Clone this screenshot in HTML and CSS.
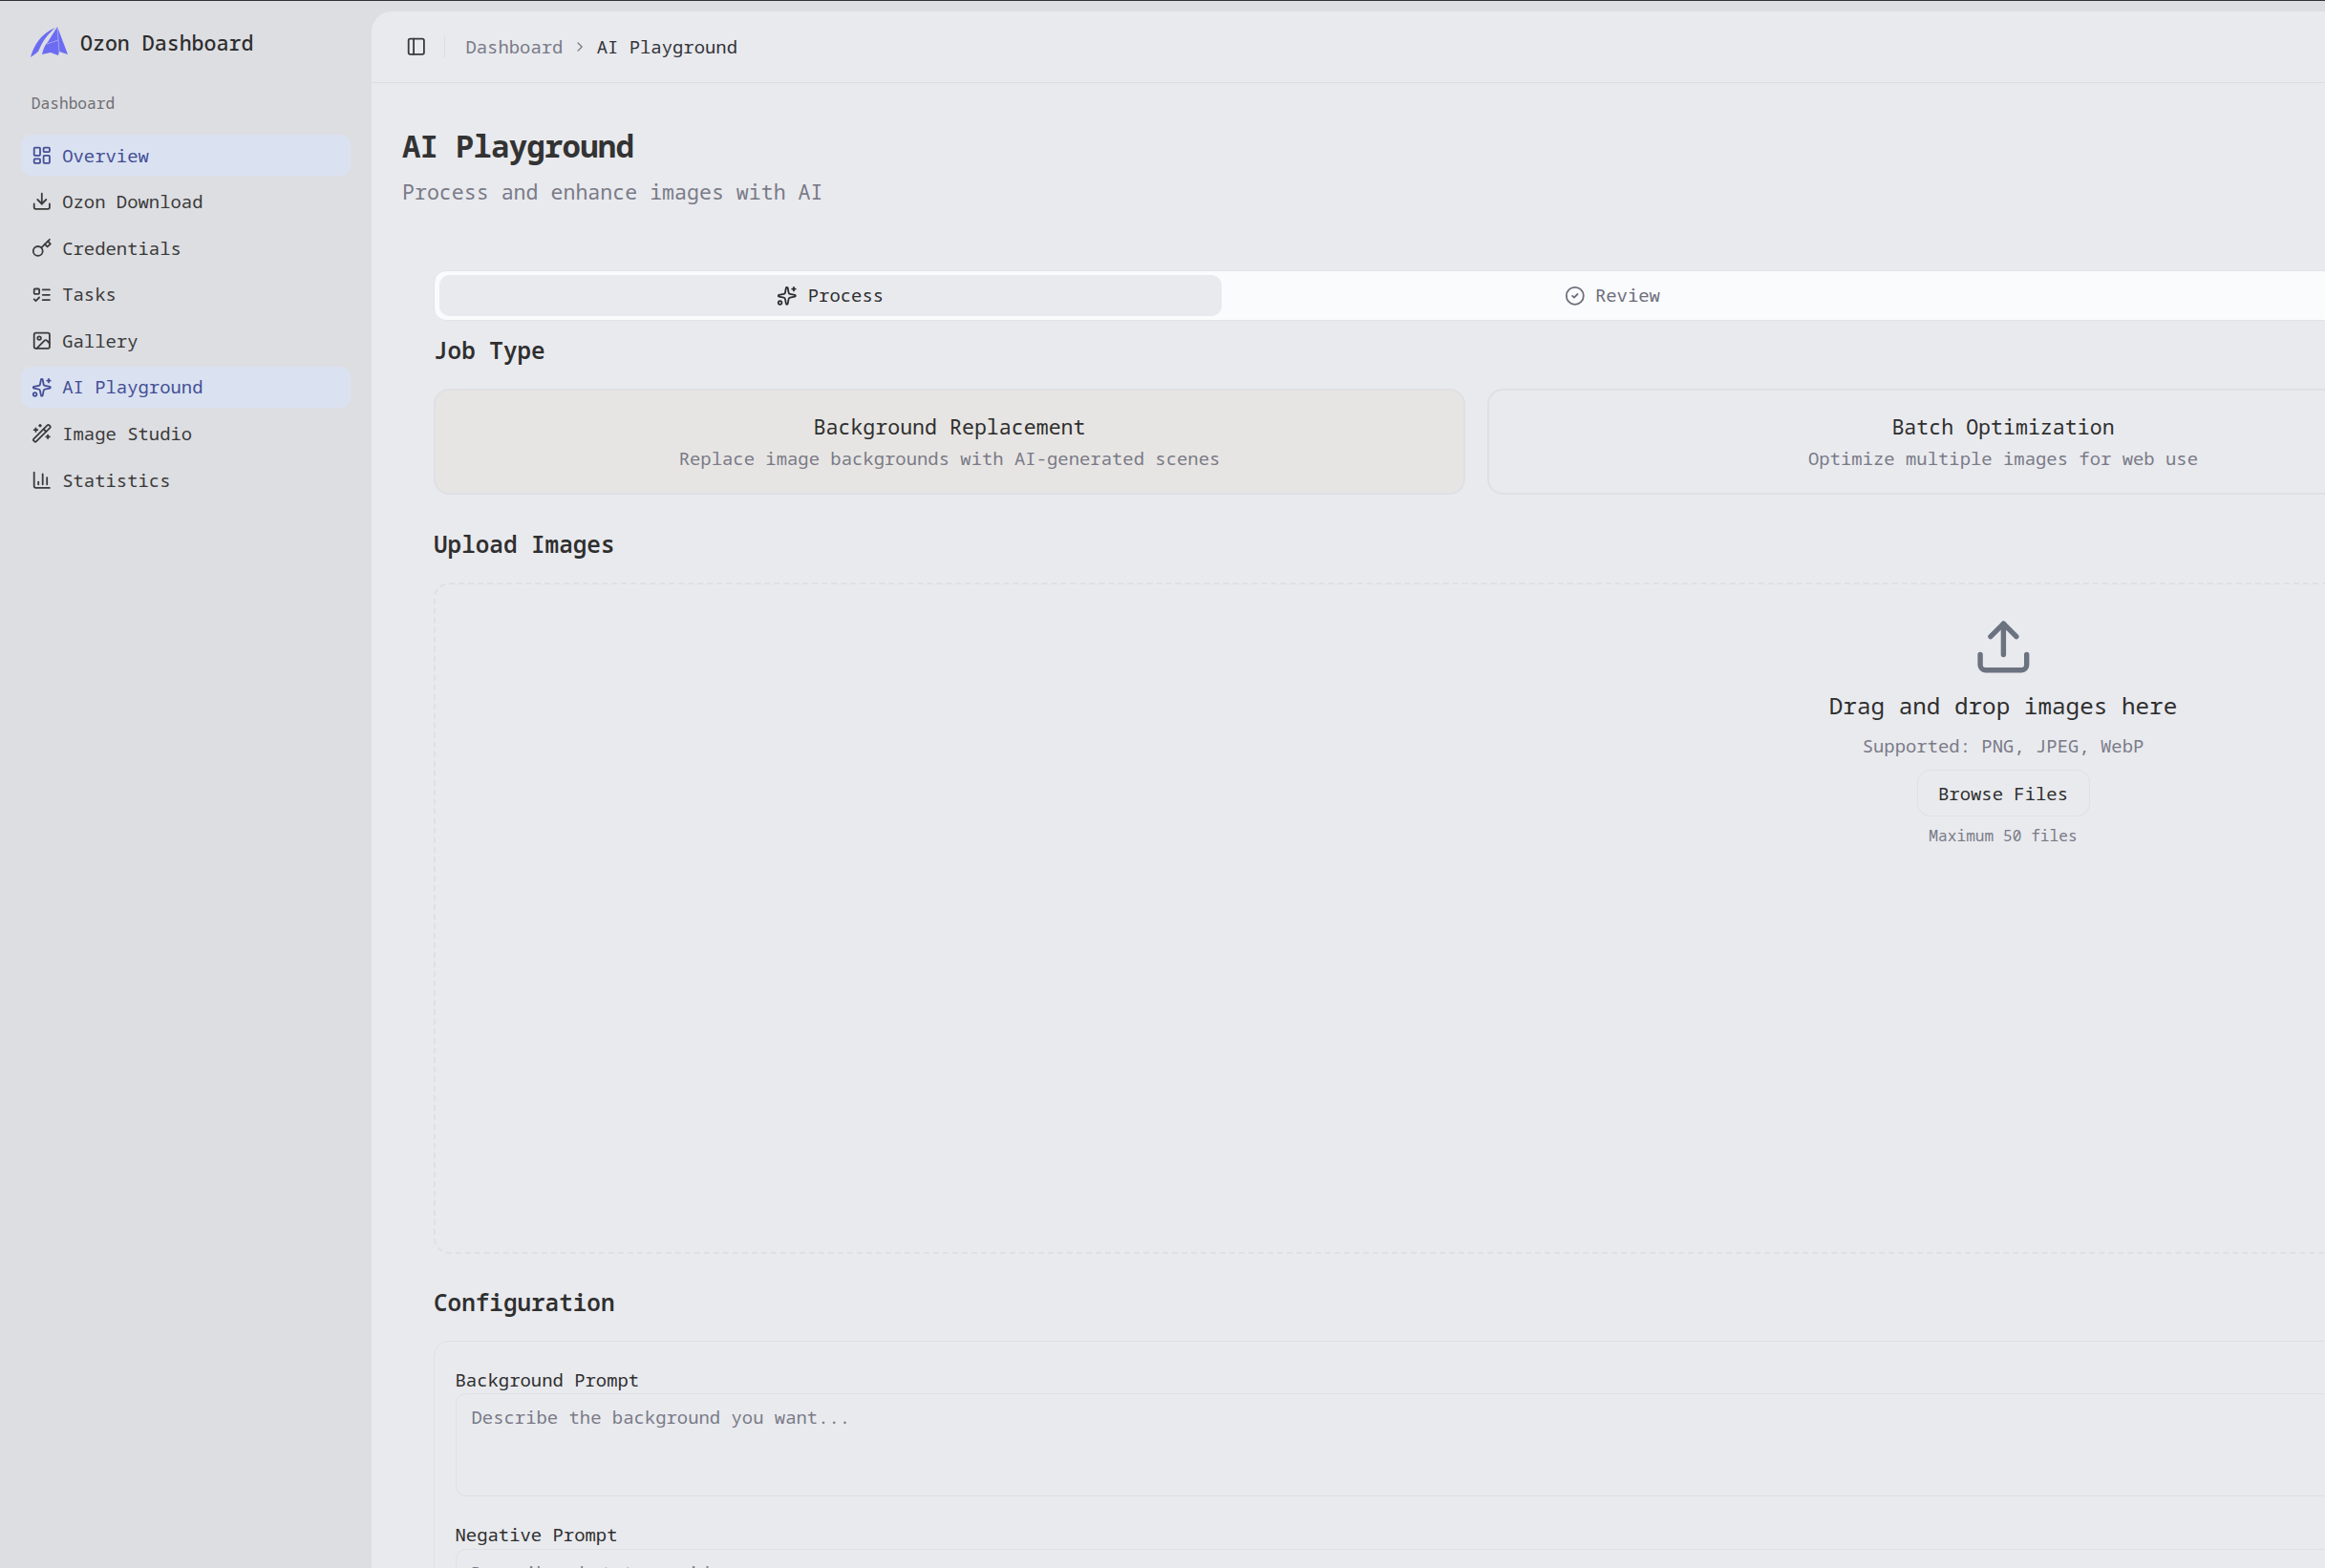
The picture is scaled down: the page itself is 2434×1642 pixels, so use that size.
FILE: index.html
```html
<!DOCTYPE html>
<html lang="en">
<head>
<meta charset="utf-8">
<title>AI Playground</title>
<link rel="stylesheet" href="styles.css">
</head>
<body>
<svg class="sprite" xmlns="http://www.w3.org/2000/svg">
  <symbol id="i-dash" viewBox="0 0 24 24"><rect width="7" height="9" x="3" y="3" rx="1"/><rect width="7" height="5" x="14" y="3" rx="1"/><rect width="7" height="9" x="14" y="12" rx="1"/><rect width="7" height="5" x="3" y="16" rx="1"/></symbol>
  <symbol id="i-download" viewBox="0 0 24 24"><path d="M21 15v4a2 2 0 0 1-2 2H5a2 2 0 0 1-2-2v-4"/><path d="m7 10 5 5 5-5"/><path d="M12 15V3"/></symbol>
  <symbol id="i-key" viewBox="0 0 24 24"><circle cx="7.5" cy="15.5" r="5.5"/><path d="m21 2-9.6 9.6"/><path d="m15.5 7.5 3 3L22 7l-3-3"/></symbol>
  <symbol id="i-tasks" viewBox="0 0 24 24"><rect x="3" y="5" width="6" height="6" rx="1"/><path d="m3 17 2 2 4-4"/><path d="M13 6h8"/><path d="M13 12h8"/><path d="M13 18h8"/></symbol>
  <symbol id="i-image" viewBox="0 0 24 24"><rect width="18" height="18" x="3" y="3" rx="2"/><circle cx="9" cy="9" r="2"/><path d="m21 15-3.086-3.086a2 2 0 0 0-2.828 0L6 21"/></symbol>
  <symbol id="i-sparkles" viewBox="0 0 24 24"><path d="M11.017 2.814a1 1 0 0 1 1.966 0l1.051 5.558a2 2 0 0 0 1.594 1.594l5.558 1.051a1 1 0 0 1 0 1.966l-5.558 1.051a2 2 0 0 0-1.594 1.594l-1.051 5.558a1 1 0 0 1-1.966 0l-1.051-5.558a2 2 0 0 0-1.594-1.594l-5.558-1.051a1 1 0 0 1 0-1.966l5.558-1.051a2 2 0 0 0 1.594-1.594z"/><path d="M20 2v4"/><path d="M22 4h-4"/><circle cx="4" cy="20" r="2"/></symbol>
  <symbol id="i-wand" viewBox="0 0 24 24"><path d="m21.64 3.64-1.28-1.28a1.21 1.21 0 0 0-1.72 0L2.36 18.64a1.21 1.21 0 0 0 0 1.72l1.28 1.28a1.2 1.2 0 0 0 1.72 0L21.64 5.36a1.2 1.2 0 0 0 0-1.72"/><path d="m14 7 3 3"/><path d="M5 6v4"/><path d="M19 14v4"/><path d="M10 2v2"/><path d="M7 8H3"/><path d="M21 16h-4"/><path d="M11 3H9"/></symbol>
  <symbol id="i-chart" viewBox="0 0 24 24"><path d="M3 3v16a2 2 0 0 0 2 2h16"/><path d="M18 17V9"/><path d="M13 17V5"/><path d="M8 17v-3"/></symbol>
  <symbol id="i-panel" viewBox="0 0 24 24"><rect width="18" height="18" x="3" y="3" rx="2"/><path d="M9 3v18"/></symbol>
  <symbol id="i-check" viewBox="0 0 24 24"><circle cx="12" cy="12" r="10"/><path d="m9 12 2 2 4-4"/></symbol>
  <symbol id="i-chevron" viewBox="0 0 24 24"><path d="m9 18 6-6-6-6"/></symbol>
  <symbol id="i-upload" viewBox="0 0 24 24"><path d="M21 15v4a2 2 0 0 1-2 2H5a2 2 0 0 1-2-2v-4"/><path d="m17 8-5-5-5 5"/><path d="M12 3v12"/></symbol>
</svg>

<aside class="sidebar">
  <div class="brand">
    <svg class="logo" viewBox="0 0 40 33" xmlns="http://www.w3.org/2000/svg">
      <path class="logo-fill" d="M0 32C3 20 11 7 26 1 18 8 13 14 9 24 7 28 5 28 0 32Z"/>
      <path class="logo-fill" d="M28 0 39 29 30 26 29 30 21 27 12 29C13 24 15 19 18 16Z"/>
      <path class="logo-line" d="M28 0 30 27M17 18 29 14"/>
    </svg>
    <span class="brand-name">Ozon Dashboard</span>
  </div>
  <div class="group-label">Dashboard</div>
  <nav class="nav">
    <a class="nav-item is-active"><svg class="icon"><use href="#i-dash"/></svg>Overview</a>
    <a class="nav-item"><svg class="icon"><use href="#i-download"/></svg>Ozon Download</a>
    <a class="nav-item"><svg class="icon"><use href="#i-key"/></svg>Credentials</a>
    <a class="nav-item"><svg class="icon"><use href="#i-tasks"/></svg>Tasks</a>
    <a class="nav-item"><svg class="icon"><use href="#i-image"/></svg>Gallery</a>
    <a class="nav-item is-active"><svg class="icon"><use href="#i-sparkles"/></svg>AI Playground</a>
    <a class="nav-item"><svg class="icon"><use href="#i-wand"/></svg>Image Studio</a>
    <a class="nav-item"><svg class="icon"><use href="#i-chart"/></svg>Statistics</a>
  </nav>
</aside>

<main class="main">
  <header class="topbar">
    <svg class="icon panel-icon"><use href="#i-panel"/></svg>
    <span class="divider"></span>
    <span class="crumb">Dashboard</span>
    <svg class="icon crumb-sep"><use href="#i-chevron"/></svg>
    <span class="crumb-current">AI Playground</span>
  </header>

  <div class="page">
    <h1 class="title">AI Playground</h1>
    <p class="subtitle">Process and enhance images with AI</p>

    <div class="content">
      <div class="tabs">
        <div class="tab is-active"><svg class="icon"><use href="#i-sparkles"/></svg>Process</div>
        <div class="tab"><svg class="icon"><use href="#i-check"/></svg>Review</div>
      </div>

      <h2 class="section-title first">Job Type</h2>
      <div class="job-grid">
        <div class="job-card is-selected">
          <div class="job-name">Background Replacement</div>
          <div class="job-desc">Replace image backgrounds with AI-generated scenes</div>
        </div>
        <div class="job-card">
          <div class="job-name">Batch Optimization</div>
          <div class="job-desc">Optimize multiple images for web use</div>
        </div>
      </div>

      <h2 class="section-title">Upload Images</h2>
      <div class="dropzone">
        <svg class="upload-icon"><use href="#i-upload"/></svg>
        <div class="drop-title">Drag and drop images here</div>
        <div class="drop-sub">Supported: PNG, JPEG, WebP</div>
        <button class="browse">Browse Files</button>
        <div class="drop-max">Maximum 50 files</div>
      </div>

      <h2 class="section-title config">Configuration</h2>
      <div class="config-card">
        <label class="field-label">Background Prompt</label>
        <div class="textarea">Describe the background you want...</div>
        <label class="field-label second">Negative Prompt</label>
        <div class="textarea">Describe what to avoid...</div>
      </div>
    </div>
  </div>
</main>
</body>
</html>
```

FILE: styles.css
```css
* { box-sizing: border-box; }

html, body { height: 100%; }

body {
  margin: 0;
  height: 1642px;
  display: flex;
  overflow: hidden;
  background: #dddee2;
  border-top: 1px solid #333436;
  color: #2f2f2f;
  font-family: "Noto Sans Mono", "DejaVu Sans Mono", monospace;
  font-size: 18.9px;
}

.sprite { display: none; }

.icon {
  width: 21.6px;
  height: 21.6px;
  flex: none;
  fill: none;
  stroke: currentColor;
  stroke-width: 2;
  stroke-linecap: round;
  stroke-linejoin: round;
}

/* Sidebar */
.sidebar {
  width: 389px;
  flex: none;
  padding: 27px 22px 0;
}

.brand {
  display: flex;
  align-items: center;
  gap: 12px;
  padding-left: 10px;
  height: 33px;
}

.logo { width: 40px; height: 33px; flex: none; }
.logo-fill { fill: #6c6cf2; }
.logo-line { fill: none; stroke: #c9cbef; stroke-width: 0.6; }

.brand-name {
  font-size: 21.6px;
  font-weight: 500;
  color: #2d2d2d;
}

.group-label {
  margin-top: 35px;
  padding-left: 10.8px;
  font-size: 16.2px;
  line-height: 24px;
  color: #6e6e72;
}

.nav {
  margin-top: 21px;
  display: flex;
  flex-direction: column;
  gap: 5.4px;
}

.nav-item {
  display: flex;
  align-items: center;
  gap: 10.8px;
  height: 43.2px;
  padding-left: 10.8px;
  border-radius: 10.8px;
  color: #3b3b3b;
}

.nav-item.is-active {
  background: #dae2f1;
  color: #454f96;
}

/* Main */
.main {
  flex: 1;
  min-width: 0;
  margin-top: 11px;
  background: #e9eaee;
  border-top-left-radius: 21px;
  overflow: hidden;
}

.topbar {
  height: 75px;
  display: flex;
  align-items: center;
  padding-left: 35.5px;
  border-bottom: 1.35px solid #dcdde2;
}

.panel-icon { color: #3a3a3a; }

.divider {
  width: 1.35px;
  height: 22px;
  margin: 0 21px 0 19px;
  background: #dcdde2;
}

.crumb { color: #7a7b88; }
.crumb-sep { width: 16.2px; height: 16.2px; margin: 0 9.5px; color: #7a7b88; }
.crumb-current { color: #33343a; }

.page { padding: 0 0 0 32px; }

.title {
  margin: 43px 0 0;
  font-size: 32.4px;
  font-weight: 700;
  line-height: 44px;
  letter-spacing: -0.81px;
  color: #333333;
}

.subtitle {
  margin: 13px 0 0;
  font-size: 21.6px;
  line-height: 28px;
  color: #7a7b88;
}

.content {
  width: 3286px;
  margin: 68px 0 0 33px;
}

/* Tabs */
.tabs {
  display: grid;
  grid-template-columns: repeat(4, 1fr);
  height: 52.6px;
  padding: 4px 5px;
  background: #fafbfd;
  border: 1.35px solid #e3e4e8;
  border-radius: 13px;
}

.tab {
  display: flex;
  align-items: center;
  justify-content: center;
  gap: 10.8px;
  border-radius: 10.8px;
  color: #6e6f7c;
}

.tab.is-active {
  background: #e9eaee;
  color: #2f2f2f;
}

/* Sections */
.section-title {
  margin: 0;
  font-size: 24.3px;
  font-weight: 600;
  line-height: 32px;
  color: #2f2f2f;
}

.section-title.first { margin-top: 15px; }

.job-grid {
  display: grid;
  grid-template-columns: repeat(3, 1fr);
  gap: 23px;
  margin-top: 24px;
}

.job-card {
  height: 111px;
  padding-top: 24px;
  border: 2.7px solid #dfe0e5;
  border-radius: 16.2px;
  text-align: center;
}

.job-card.is-selected { background: #e7e5e3; }

.job-name {
  font-size: 21.6px;
  line-height: 28px;
  color: #2f2f2f;
}

.job-desc {
  margin-top: 6.5px;
  line-height: 26px;
  color: #7a7b88;
}

.job-grid + .section-title { margin-top: 36.5px; }

/* Dropzone */
.dropzone {
  height: 703px;
  margin-top: 24px;
  padding-top: 33px;
  display: flex;
  flex-direction: column;
  align-items: center;
  border: 2.7px dashed #dfe0e5;
  border-radius: 16.2px;
}

.upload-icon {
  width: 64.8px;
  height: 64.8px;
  flex: none;
  fill: none;
  stroke: #6b7280;
  stroke-width: 2;
  stroke-linecap: round;
  stroke-linejoin: round;
}

.drop-title {
  margin-top: 13.5px;
  font-size: 24.3px;
  font-weight: 450;
  line-height: 32px;
  color: #2f2f2f;
}

.drop-sub {
  margin-top: 12.5px;
  line-height: 26px;
  color: #7a7b88;
}

.browse {
  width: 181px;
  height: 49px;
  margin-top: 12.5px;
  background: transparent;
  border: 1.35px solid #dfe0e5;
  border-radius: 13.5px;
  font: inherit;
  font-weight: 450;
  color: #2f2f2f;
}

.drop-max {
  margin-top: 9px;
  font-size: 16.2px;
  line-height: 22px;
  color: #7a7b88;
}

/* Configuration */
.section-title.config { margin-top: 34.5px; }

.config-card {
  margin-top: 24.5px;
  padding: 26.5px 21.5px 0;
  height: 400px;
  border: 1.35px solid #dfe0e5;
  border-radius: 16.2px;
}

.field-label {
  display: block;
  height: 27px;
  line-height: 26px;
  font-weight: 450;
  color: #2f2f2f;
}

.field-label.second { margin-top: 27px; height: 28px; }

.textarea {
  height: 108px;
  padding: 11.5px 16px;
  line-height: 26px;
  border: 1.35px solid #dfe0e5;
  border-radius: 10.8px;
  color: #7a7b88;
}
```
